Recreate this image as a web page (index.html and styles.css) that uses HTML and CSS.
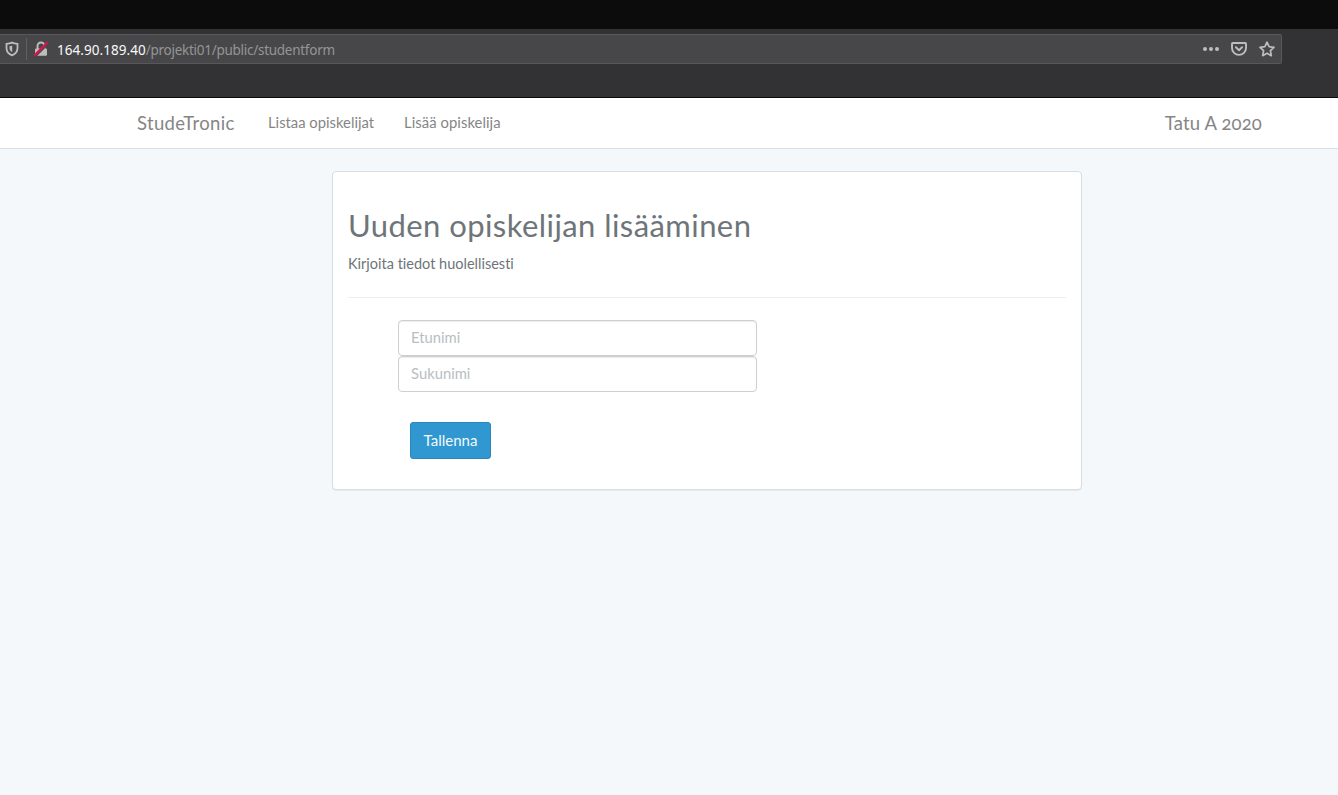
FILE: index.html
```html
<!DOCTYPE html>
<html lang="fi">
<head>
<meta charset="utf-8">
<title>StudeTronic</title>
<link rel="stylesheet" href="styles.css">
</head>
<body>
<div class="tabstrip"></div>
<div class="toolbar">
  <div class="urlbar">
    <svg class="shield" width="14" height="16" viewBox="0 0 14 16" fill="none" stroke="#bdbdbe"><path d="M7 1.6C5.2 2.5 3.3 2.7 1.5 2.8V7C1.5 10.5 3.6 13 7 14.3C10.4 13 12.5 10.5 12.5 7V2.8C10.7 2.7 8.8 2.5 7 1.6Z" stroke-width="1.8"/><path d="M7.2 4.6V11.3C5.2 10.2 4.5 8.8 4.5 6.8V5.2C5.5 5.1 6.3 4.9 7.2 4.6Z" fill="#bdbdbe" stroke="none"/></svg>
    <span class="divider"></span>
    <svg class="lock" width="16" height="16" viewBox="0 0 16 16"><path d="M4.5 8V5a3.5 3.5 0 0 1 7 0v3" fill="none" stroke="#bdbdbe" stroke-width="1.9"/><rect x="2" y="7.4" width="12" height="7.4" rx="1.2" fill="#bdbdbe"/><path d="M3 15L15.4 2.6" stroke="#48484a" stroke-width="1.6"/><path d="M1.3 14.6L14.6 1.3" stroke="#d7134e" stroke-width="2.3"/></svg>
    <span class="url"><span class="host">164.90.189.40</span>/projekti01/public/studentform</span>
    <span class="actions">
      <svg width="18" height="16" viewBox="0 0 18 16" fill="#bdbdbe"><circle cx="3" cy="8" r="2"/><circle cx="9" cy="8" r="2"/><circle cx="15" cy="8" r="2"/></svg>
      <svg width="16" height="16" viewBox="0 0 16 16" fill="none" stroke="#bdbdbe" stroke-width="1.9" stroke-linecap="round" stroke-linejoin="round"><path d="M1.7 2H14.3a.7.7 0 0 1 .7.7V7A7 6.9 0 0 1 1 7V2.7a.7.7 0 0 1 .7-.7Z"/><path d="M4.9 6.2L8 9.2L11.1 6.2"/></svg>
      <svg width="16" height="16" viewBox="0 0 16 16" fill="none" stroke="#bdbdbe" stroke-width="1.7" stroke-linejoin="round"><path d="M8 1.2L10.1 5.7L15 6.3L11.4 9.7L12.3 14.7L8 12.3L3.7 14.7L4.6 9.7L1 6.3L5.9 5.7Z"/></svg>
    </span>
  </div>
</div>
<nav class="navbar">
  <a class="brand">StudeTronic</a>
  <a class="link list">Listaa opiskelijat</a>
  <a class="link add">Lisää opiskelija</a>
  <span class="owner">Tatu A 2020</span>
</nav>
<main class="panel">
  <h2 class="title">Uuden opiskelijan lisääminen</h2>
  <p class="lead">Kirjoita tiedot huolellisesti</p>
  <hr class="rule">
  <form class="form">
    <input class="field" type="text" placeholder="Etunimi">
    <input class="field last-name" type="text" placeholder="Sukunimi">
    <button class="save" type="button">Tallenna</button>
  </form>
</main>
</body>
</html>
```
FILE: styles.css
```css
* { box-sizing: border-box; }
body {
  margin: 0;
  min-height: 795px;
  background: #f4f8fb;
  color: #6d7579;
  font: 14.5px/22px Lato, sans-serif;
  font-variant-ligatures: none;
}
.tabstrip { height: 29px; background: #0c0c0d; }
.toolbar {
  height: 69px;
  padding-top: 5px;
  background: #323234;
  border-bottom: 1px solid #0c0c0d;
}
.urlbar {
  display: flex;
  align-items: center;
  width: 1282px;
  height: 30px;
  padding: 0 6px 1px 5px;
  background: #474749;
  border: 1px solid #58585a;
  border-left: 0;
  border-radius: 0 2px 2px 0;
}
.divider { width: 1px; height: 22px; margin: 0 6px 0 7px; background: #606062; }
.lock { margin-right: 8px; }
.url {
  font: 13.5px/20px "Noto Sans", sans-serif;
  letter-spacing: -.27px;
  color: #959596;
  padding-top: 3px;
}
.host { color: #f9f9fa; letter-spacing: .05px; }
.actions { display: flex; gap: 12px; margin-left: auto; }
.actions svg:first-child { margin-right: -1px; }
.navbar {
  display: flex;
  height: 51px;
  padding: 0 76px 0 137px;
  background: #fff;
  border-bottom: 1px solid #d5dfe5;
  line-height: 50px;
  color: #858585;
}
.brand, .owner { font-size: 18.5px; }
.brand { width: 131px; letter-spacing: .35px; }
.link { font-size: 14.8px; line-height: 48px; }
.list { width: 136px; }
.add { letter-spacing: .07px; }
.owner { margin-left: auto; letter-spacing: .15px; font-feature-settings: "onum" 1; }
.panel {
  width: 750px;
  height: 319px;
  margin: 22px 0 0 332px;
  padding: 37px 15px 0;
  background: #fff;
  border: 1px solid #d3dfe4;
  border-radius: 4px;
  box-shadow: 0 1px 1px rgba(0,0,0,.05);
}
.title { margin: 0; font-size: 31px; line-height: 33px; font-weight: 400; letter-spacing: .43px; }
.lead { margin: 11px 0 0; }
.rule { margin: 22px 0; border: 0; border-top: 1px solid #eee; }
.form { display: flex; flex-direction: column; align-items: flex-start; padding-left: 50px; }
.field {
  width: 359px;
  height: 36px;
  padding: 5px 12px 7px;
  font: 14.8px/22px Lato, sans-serif;
  color: #555;
  background: #fff;
  border: 1px solid #ccd0d2;
  border-radius: 4px;
  box-shadow: inset 0 1px 1px rgba(0,0,0,.075);
}
.field::placeholder { color: #b8bec1; opacity: 1; }
.save {
  width: 81px;
  height: 37px;
  margin: 30px 0 0 12px;
  padding: 0 0 2px;
  font: 15px/22px Lato, sans-serif;
  color: #f4fafd;
  background: #3097d1;
  border: 1px solid #2a88bd;
  border-radius: 3px;
}
```
